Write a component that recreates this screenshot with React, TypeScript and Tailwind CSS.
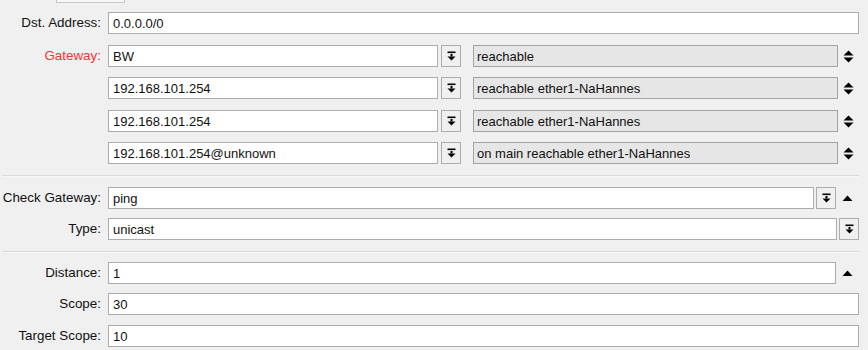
import React from "react";

const font = { fontFamily: '"Liberation Sans", Arial, sans-serif' };

function DropIcon() {
  return (
    <svg width="9" height="10" viewBox="0 0 9 10">
      <rect x="0.5" y="0.5" width="8" height="1.6" fill="#000" />
      <rect x="3.5" y="3" width="2" height="2.5" fill="#000" />
      <polygon points="0.5,5.5 8.5,5.5 4.5,9.5" fill="#000" />
    </svg>
  );
}

function DropBtn() {
  return (
    <div className="w-[20px] h-[22px] shrink-0 border border-[#adadad] bg-[#f0f0f0] flex items-center justify-center">
      <DropIcon />
    </div>
  );
}

function UpDown() {
  return (
    <svg width="11" height="13" viewBox="0 0 11 13">
      <polygon points="0.5,5.5 10.5,5.5 5.5,0.5" fill="#000" />
      <polygon points="0.5,7.5 10.5,7.5 5.5,12.5" fill="#000" />
    </svg>
  );
}

function Up() {
  return (
    <svg width="11" height="7" viewBox="0 0 11 7">
      <polygon points="0.5,6 10.5,6 5.5,0.5" fill="#000" />
    </svg>
  );
}

function Input({ value, className = "" }: { value: string; className?: string }) {
  return (
    <div
      className={
        "h-[22px] border border-[#acacac] bg-white flex items-center pl-[4px] text-[13px] text-[#111] leading-none whitespace-nowrap overflow-hidden " +
        className
      }
    >
      {value}
    </div>
  );
}

function Status({ value }: { value: string }) {
  return (
    <div className="h-[22px] w-[365px] shrink-0 border border-[#a3a3a3] bg-[#e6e6e6] flex items-center pl-[3px] text-[13px] text-[#111] leading-none whitespace-nowrap">
      {value}
    </div>
  );
}

function Label({ text, red = false }: { text: string; red?: boolean }) {
  return (
    <div
      className={
        "w-[101px] shrink-0 text-right text-[13.4px] leading-none whitespace-nowrap mr-[7px] " +
        (red ? "text-[#f03535]" : "text-[#111]")
      }
    >
      {text}
    </div>
  );
}

function GatewayRow({ label, value, status, red, mt }: { label: string; value: string; status: string; red?: boolean; mt: string }) {
  return (
    <div className={"flex items-center h-[22px] " + mt}>
      <Label text={label} red={red} />
      <Input value={value} className="w-[330px] shrink-0" />
      <div className="ml-[3px]">
        <DropBtn />
      </div>
      <div className="ml-[12px]">
        <Status value={status} />
      </div>
      <div className="w-[22px] flex justify-center">
        <UpDown />
      </div>
    </div>
  );
}

function Sep({ mt }: { mt: string }) {
  return (
    <div className={"ml-[2px] h-[2px] border-t border-[#dadada] border-b border-b-[#f8f8f8] " + mt} />
  );
}

export default function App() {
  return (
    <div className="w-[868px] h-[350px] bg-[#f0f0f0] overflow-hidden relative" style={font}>
      <div className="absolute left-[56px] top-0 w-[69px] h-[3px] border border-t-0 border-[#c8c8c8] bg-[#f7f7f7]" />
      <div className="w-[859px] pt-[12px] flex flex-col">
        <div className="flex items-center h-[22px]">
          <Label text="Dst. Address:" />
          <Input value="0.0.0.0/0" className="flex-1" />
        </div>
        <GatewayRow label="Gateway:" red value="BW" status="reachable" mt="mt-[11px]" />
        <GatewayRow label="" value="192.168.101.254" status="reachable ether1-NaHannes" mt="mt-[10px]" />
        <GatewayRow label="" value="192.168.101.254" status="reachable ether1-NaHannes" mt="mt-[11px]" />
        <GatewayRow label="" value="192.168.101.254@unknown" status="on main reachable ether1-NaHannes" mt="mt-[10px]" />

        <Sep mt="mt-[11px]" />

        <div className="flex items-center h-[22px] mt-[10px]">
          <Label text="Check Gateway:" />
          <Input value="ping" className="flex-1" />
          <div className="ml-[2px]">
            <DropBtn />
          </div>
          <div className="w-[23px] flex justify-center">
            <Up />
          </div>
        </div>
        <div className="flex items-center h-[22px] mt-[9px]">
          <Label text="Type:" />
          <Input value="unicast" className="flex-1" />
          <div className="ml-[2px]">
            <DropBtn />
          </div>
        </div>

        <Sep mt="mt-[11px]" />

        <div className="flex items-center h-[22px] mt-[9px]">
          <Label text="Distance:" />
          <Input value="1" className="flex-1" />
          <div className="w-[23px] flex justify-center">
            <Up />
          </div>
        </div>
        <div className="flex items-center h-[22px] mt-[9px]">
          <Label text="Scope:" />
          <Input value="30" className="flex-1" />
        </div>
        <div className="flex items-center h-[22px] mt-[10px]">
          <Label text="Target Scope:" />
          <Input value="10" className="flex-1" />
        </div>
      </div>
    </div>
  );
}
